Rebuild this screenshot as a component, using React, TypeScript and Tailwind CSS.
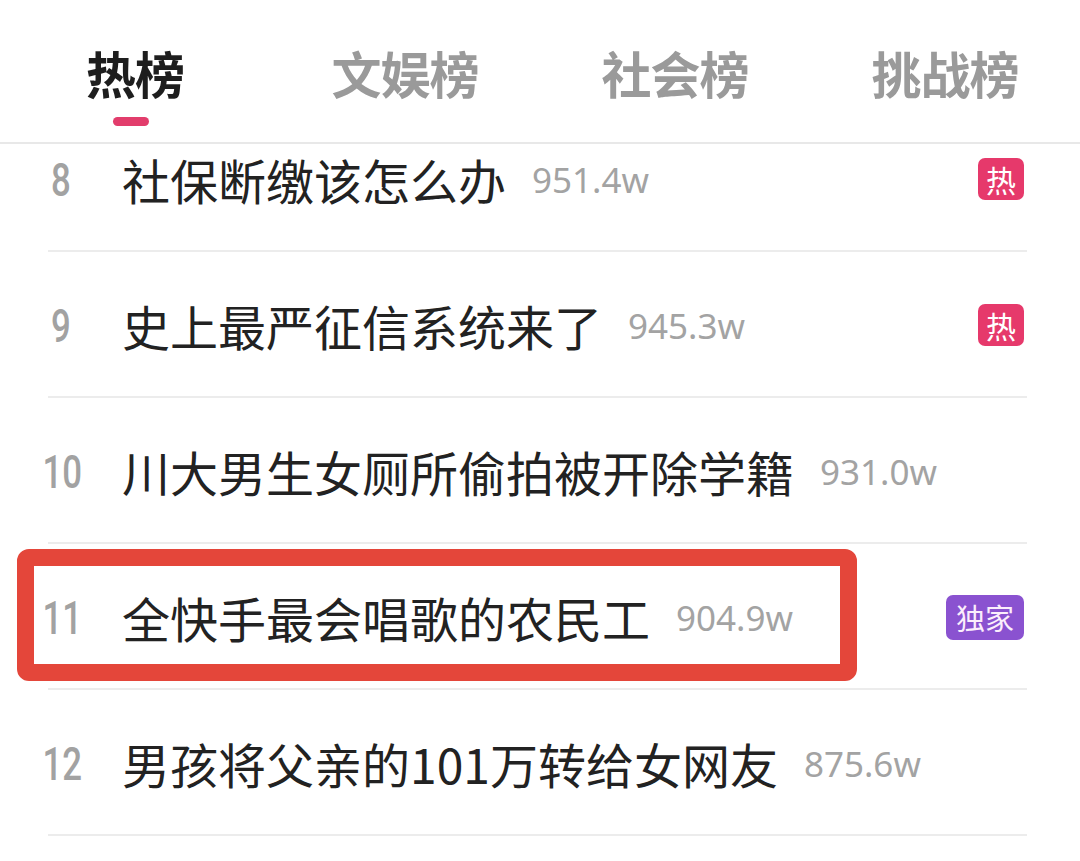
import React from 'react';

type Item = {
  rank: number;
  title: string;
  count: string;
  tag?: 'hot' | 'exclusive';
};

const TABS = ['热榜', '文娱榜', '社会榜', '挑战榜'];

const ITEMS: Item[] = [
  { rank: 8, title: '社保断缴该怎么办', count: '951.4w', tag: 'hot' },
  { rank: 9, title: '史上最严征信系统来了', count: '945.3w', tag: 'hot' },
  { rank: 10, title: '川大男生女厕所偷拍被开除学籍', count: '931.0w' },
  { rank: 11, title: '全快手最会唱歌的农民工', count: '904.9w', tag: 'exclusive' },
  { rank: 12, title: '男孩将父亲的101万转给女网友', count: '875.6w' },
];

const CJK = "font-['Noto_Sans_CJK_SC','Noto_Sans',sans-serif]";

function Tag({ kind }: { kind: Item['tag'] }) {
  if (kind === 'hot') {
    return (
      <span className="flex h-[42px] w-[46px] items-center justify-center rounded-[7px] bg-[#e6396b] text-[30px] leading-none text-white">
        热
      </span>
    );
  }
  if (kind === 'exclusive') {
    return (
      <span className="flex h-[45px] w-[78px] items-center justify-center rounded-[7px] bg-[#8a52d0] text-[29px] leading-none text-[#fbeefc]">
        独家
      </span>
    );
  }
  return null;
}

function Row({ item }: { item: Item }) {
  return (
    <li className="relative flex h-[146px] items-center">
      <span className="w-[122px] shrink-0 pl-[36px]">
        <span className="block w-[50px] scale-x-[0.74] text-center font-['Roboto',sans-serif] text-[47px] font-medium leading-none text-[#a2a2a2]">
          {item.rank}
        </span>
      </span>
      <span className="text-[48px] leading-none text-[#222222]">{item.title}</span>
      <span className="ml-[26px] font-['Noto_Sans','Lato',sans-serif] text-[35px] leading-none text-[#a3a3a3]">
        {item.count}
      </span>
      <span className="ml-auto mr-[56px]">
        <Tag kind={item.tag} />
      </span>
      <span className="absolute bottom-0 left-[48px] right-[53px] h-[2px] bg-[#ececec]" />
    </li>
  );
}

export default function App() {
  return (
    <div className={`relative h-[861px] w-[1080px] overflow-hidden bg-white ${CJK}`}>
      <header className="relative z-10 h-[144px] border-b-2 border-[#e8e8e8] bg-white">
        <nav className="grid h-full grid-cols-4">
          {TABS.map((tab, i) => (
            <div key={tab} className="relative flex justify-center pt-[47px]">
              <span
                className={`text-[50px] font-bold leading-none tracking-[-1px] ${
                  i === 0 ? 'text-[#1e1e1e]' : 'text-[#9a9a9a]'
                }`}
              >
                {tab}
              </span>
              {i === 0 && (
                <span className="absolute left-[113px] top-[117px] h-[9px] w-[36px] rounded-full bg-[#e23d6c]" />
              )}
            </div>
          ))}
        </nav>
      </header>

      <ul className="-mt-[38px]">
        {ITEMS.map((item) => (
          <Row key={item.rank} item={item} />
        ))}
      </ul>

      {/* highlight box around #11 */}
      <div className="pointer-events-none absolute left-[17px] top-[549px] h-[132px] w-[840px] rounded-[12px] border-[17px] border-[#e4463a]" />
    </div>
  );
}
